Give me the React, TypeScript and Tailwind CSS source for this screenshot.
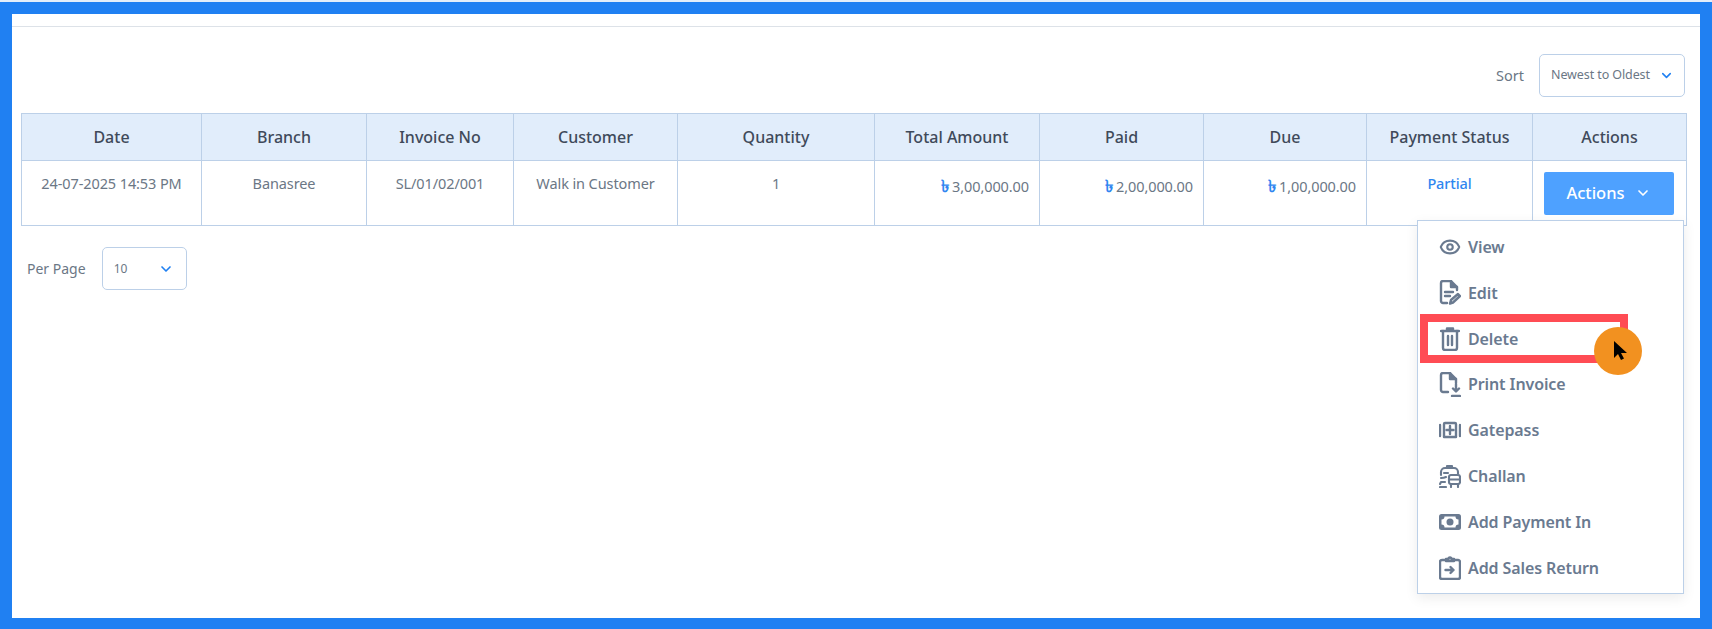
import React from "react";
import { ChevronDown, Eye } from "lucide-react";

const cols = [
  ["Date", "w-[180px]"],
  ["Branch", "w-[165px]"],
  ["Invoice No", "w-[147px]"],
  ["Customer", "w-[164px]"],
  ["Quantity", "w-[197px]"],
  ["Total Amount", "w-[165px]"],
  ["Paid", "w-[164px]"],
  ["Due", "w-[163px]"],
  ["Payment Status", "w-[166px]"],
  ["Actions", "w-[154px]"],
];

const s = { fill: "none", stroke: "currentColor", strokeWidth: 2.4, strokeLinecap: "round" as const, strokeLinejoin: "round" as const };

const EditIcon = () => (
  <svg width="22" height="25" viewBox="0 0 22 25" {...s}>
    <path d="M8 23H4a2 2 0 0 1-2-2V3a2 2 0 0 1 2-2h8l6 6v3" />
    <path d="M12 1v6h6" fill="currentColor" />
    <path d="M6 12h8M6 16h5" />
    <path d="M11 23.5l1-3.5 7-6 2 2-7 6.5z" />
  </svg>
);
const TrashIcon = () => (
  <svg width="20" height="24" viewBox="0 0 20 24" {...s}>
    <path d="M1 4h18M7 4V1.5h6V4" />
    <path d="M3 4v17a2 2 0 0 0 2 2h10a2 2 0 0 0 2-2V4" />
    <path d="M8 9v9M12 9v9" />
  </svg>
);
const PrintIcon = () => (
  <svg width="22" height="25" viewBox="0 0 22 25" {...s}>
    <path d="M9 20H4a2 2 0 0 1-2-2V3a2 2 0 0 1 2-2h7l6 6v4" />
    <path d="M11 1v6h6" fill="currentColor" />
    <path d="M17 12v7M14 16.5l3 3 3-3M13 24h8" />
  </svg>
);
const GateIcon = () => (
  <svg width="22" height="18" viewBox="0 0 22 18" {...s}>
    <path d="M1 4v11M21 4v11" />
    <path d="M5 16V3a1 1 0 0 1 1-1h10a1 1 0 0 1 1 1v13z" />
    <path d="M11 5v8M7.5 9h7" />
  </svg>
);
const BusIcon = () => (
  <svg width="22" height="24" viewBox="0 0 22 24" {...s} strokeWidth={2.1}>
    <path d="M8 4V2h5v2" />
    <path d="M2 11V8a4 4 0 0 1 4-4h9a4 4 0 0 1 4 4v2" />
    <path d="M5 9h4M2 14c2 0 3 0 5-1M6 18H2l-1 2M1 23h6" />
    <rect x="10" y="11" width="11" height="9" rx="2" />
    <path d="M10 15.5h11M12 20v3M19 20v3" />
  </svg>
);
const MoneyIcon = () => (
  <svg width="22" height="16" viewBox="0 0 22 16">
    <rect x="0" y="0" width="22" height="16" rx="2.5" fill="currentColor" />
    <path d="M2.5 5.5a3 3 0 0 0 3-3h11a3 3 0 0 0 3 3v5a3 3 0 0 0-3 3h-11a3 3 0 0 0-3-3z" fill="#fff" />
    <circle cx="11" cy="8" r="3.5" fill="currentColor" />
  </svg>
);
const ReturnIcon = () => (
  <svg width="22" height="24" viewBox="0 0 22 24" {...s}>
    <path d="M7 4H3a2 2 0 0 0-2 2v15a2 2 0 0 0 2 2h16a2 2 0 0 0 2-2V6a2 2 0 0 0-2-2h-4" />
    <path d="M7 5V3h2.5a1.5 1.5 0 0 1 3 0H15v2z" />
    <path d="M6.5 14h8M11.5 11l3 3-3 3" />
  </svg>
);

const items: [React.ReactNode, string][] = [
  [<Eye size={22} strokeWidth={2.3} />, "View"],
  [<EditIcon />, "Edit"],
  [<TrashIcon />, "Delete"],
  [<PrintIcon />, "Print Invoice"],
  [<GateIcon />, "Gatepass"],
  [<BusIcon />, "Challan"],
  [<MoneyIcon />, "Add Payment In"],
  [<ReturnIcon />, "Add Sales Return"],
];

const Money = ({ v }: { v: string }) => (
  <td className="border border-[#bcd0e8] px-[10px] pt-[12px] align-top text-right">
    <span className="text-[17px] font-semibold text-[#2f86f0]">৳</span> {v}
  </td>
);

export default function App() {
  return (
    <div className="h-[629px] w-[1712px] overflow-hidden bg-[#2080f2] pt-[14px] pl-[12px] pr-[12px] pb-[11px] shadow-[inset_0_2px_0_#e4eefa] font-['Noto_Sans',sans-serif]">
      <div className="relative h-full bg-white pt-[12px]">
        <div className="border-t border-[#dde2e8]" />

        <div className="mt-[27px] flex items-center justify-end pr-[15px]">
          <span className="mr-[15px] text-[14.5px] text-[#6b7785]">Sort</span>
          <div className="flex h-[43px] w-[146px] items-center justify-between rounded-[5px] border border-[#bcd0e8] pl-[11px] pr-[10px] text-[12.5px] tracking-[-0.1px] text-[#6b7785]">
            <span>Newest to Oldest</span>
            <ChevronDown size={15} strokeWidth={2.5} className="text-[#2080f2]" />
          </div>
        </div>

        <div className="ml-[9px] mt-[16px] w-[1665px]">
          <table className="w-full table-fixed border-collapse text-[14.5px] tracking-[-0.1px] text-[#6b7785]">
            <thead>
              <tr className="h-[47px] bg-[#e1edfb]">
                {cols.map(([c, w]) => (
                  <th key={c} className={`${w} border border-[#bcd0e8] pb-[1px] text-center text-[16px] font-medium tracking-[0px] text-[#3f4a5a]`}>
                    {c}
                  </th>
                ))}
              </tr>
            </thead>
            <tbody>
              <tr className="h-[65px]">
                <td className="border border-[#bcd0e8] pt-[12px] align-top text-center">24-07-2025 14:53 PM</td>
                <td className="border border-[#bcd0e8] pt-[12px] align-top text-center">Banasree</td>
                <td className="border border-[#bcd0e8] pt-[12px] align-top text-center">SL/01/02/001</td>
                <td className="border border-[#bcd0e8] pt-[12px] align-top text-center">Walk in Customer</td>
                <td className="border border-[#bcd0e8] pt-[12px] align-top text-center">1</td>
                <Money v="3,00,000.00" />
                <Money v="2,00,000.00" />
                <Money v="1,00,000.00" />
                <td className="border border-[#bcd0e8] pt-[12px] align-top text-center font-medium text-[#2f86f0]">Partial</td>
                <td className="border border-[#bcd0e8] pr-[2px] align-middle">
                  <div className="mx-auto flex h-[43px] w-[130px] items-center justify-center gap-[10px] rounded-[2px] bg-[#4ea1ff] text-[16.5px] font-medium tracking-[0px] text-white">
                    Actions
                    <ChevronDown size={16} strokeWidth={2.5} />
                  </div>
                </td>
              </tr>
            </tbody>
          </table>
        </div>

        <div className="ml-[15px] mt-[21px] flex items-center">
          <span className="text-[14px] text-[#6b7785]">Per Page</span>
          <div className="ml-[16px] flex h-[43px] w-[85px] items-center justify-between rounded-[5px] border border-[#bcd0e8] pl-[11px] pr-[12px] text-[12px] text-[#6b7785]">
            <span>10</span>
            <ChevronDown size={16} strokeWidth={2.5} className="text-[#2080f2]" />
          </div>
        </div>

        <div className="absolute left-[1405px] top-[206px] w-[267px] border border-[#bcd0e8] bg-white pt-[3px] pb-[2px] shadow-[0_4px_12px_rgba(0,0,0,0.08)]">
          {items.map(([icon, label]) => (
            <div key={label} className="flex h-[45.85px] items-center text-[16px] font-semibold tracking-[-0.1px] text-[#6a7a90]">
              <span className="ml-[21px] flex w-[22px] justify-center">{icon}</span>
              <span className="ml-[7px]">{label}</span>
            </div>
          ))}
        </div>

        <div className="absolute left-[1408px] top-[300px] h-[49px] w-[208px] border-[8px] border-[#ff4c54]" />
        <div className="absolute left-[1582px] top-[313px] h-[48px] w-[48px] rounded-full bg-[#f29120]">
          <svg className="absolute left-[19px] top-[14px]" width="15" height="20" viewBox="0 0 15 20">
            <path d="M1 0v17l4-4 3 6 3-1.5-3-5.5h6z" fill="#000" />
          </svg>
        </div>
      </div>
    </div>
  );
}
